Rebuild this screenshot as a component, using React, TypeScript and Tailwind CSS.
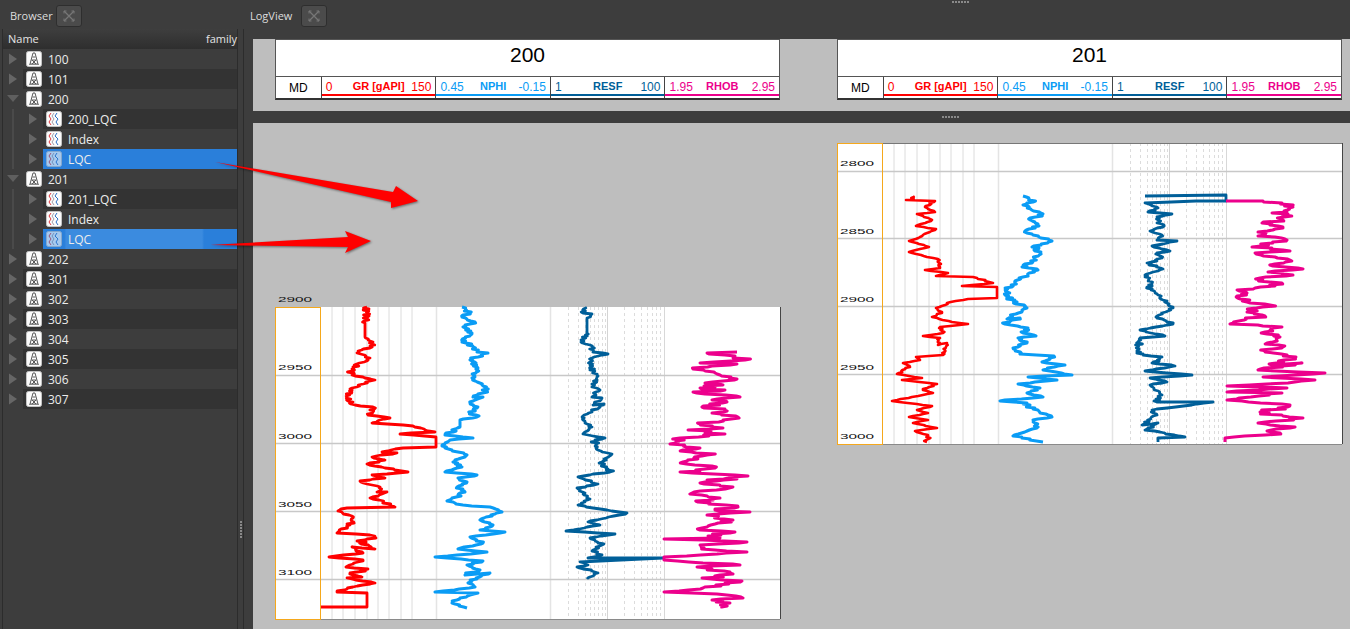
import React from "react"

type Pts = number[]

const RED = "#ff0000"
const BLUE = "#0a9cf5"
const NAVY = "#005f99"
const PINK = "#ec008c"

// curve anchors are x,y pairs in page pixels, traced off the screenshot
const L_GR: Pts = [367,307,365,323,365,337,373,342,370,348,357,353,370,358,353,367,352,375,375,380,350,389,347,397,355,405,373,407,368,415,390,418,372,423,413,426,435,432,400,434,436,437,436,447,403,448,382,452,397,453,372,457,385,460,367,464,385,468,408,472,372,475,385,478,360,481,380,487,377,492,387,492,370,498,383,502,395,507,347,508,338,511,353,518,350,525,337,533,370,535,376,538,357,541,375,549,352,547,363,553,329,557,363,560,346,567,368,569,350,573,362,577,347,578,375,583,353,587,337,592,367,593,367,607,320,607]
const L_NPHI: Pts = [462,307,470,313,462,317,475,322,463,327,472,333,462,342,473,347,477,352,488,353,470,360,478,368,472,378,482,385,487,391,473,397,483,397,470,403,477,408,470,413,477,417,460,420,460,427,445,435,473,438,450,440,442,446,458,452,467,455,453,462,462,467,445,472,477,475,458,478,467,482,457,487,465,492,458,495,447,501,463,505,490,507,502,512,480,520,493,525,480,530,505,532,470,537,483,543,458,549,487,552,435,557,483,561,467,565,480,570,465,575,490,573,468,583,475,587,435,592,478,593,460,598,452,603,467,608]
const L_RESF: Pts = [585,307,583,313,592,314,587,318,587,333,581,342,590,345,593,352,608,354,592,358,590,365,597,377,592,387,600,390,592,397,602,398,593,405,604,404,583,416,585,423,592,427,583,434,605,438,595,440,598,450,612,454,602,462,610,472,578,477,598,484,577,488,590,499,578,505,593,508,627,513,588,522,600,525,566,531,615,534,590,538,602,545,593,550,602,555,588,558,663,558,580,562,588,565,577,567,598,573,587,579]
const L_RHOB: Pts = [737,352,707,353,735,356,745,360,700,363,737,364,712,366,693,369,720,375,737,379,705,383,723,385,700,388,725,390,693,392,740,397,712,400,727,402,702,407,725,410,712,413,738,417,700,424,723,428,688,430,725,434,680,438,670,444,700,448,683,450,707,455,683,462,715,468,680,472,748,476,707,480,737,479,700,483,733,487,692,493,720,498,698,502,738,507,715,510,750,512,707,515,733,520,715,524,700,530,735,532,708,536,720,538,664,539,747,542,700,545,715,550,747,552,664,557,664,560,740,565,697,567,733,574,702,578,742,581,703,588,664,592,717,594,743,598,712,600,730,603,722,608]

const R_GR: Pts = [913,196,912,200,906,200,935,201,925,207,935,212,917,214,932,220,916,226,936,229,920,237,909,241,929,247,909,252,927,257,938,259,940,268,925,270,948,273,936,276,973,277,993,283,962,286,997,287,997,298,968,299,947,303,936,308,942,313,932,317,952,322,968,324,940,327,943,333,923,336,940,338,938,345,947,343,943,355,916,357,920,360,903,363,910,367,897,374,922,378,902,380,937,384,923,390,933,393,892,401,932,406,917,410,928,413,909,417,928,420,913,423,937,428,915,431,928,435,927,442]
const R_NPHI: Pts = [1023,196,1033,202,1023,205,1043,214,1030,218,1039,226,1025,231,1033,235,1052,241,1032,247,1040,253,1032,263,1022,267,1038,270,1023,277,1015,283,1005,295,1017,302,1027,308,1007,319,1020,318,1005,324,1028,328,1023,333,1036,336,1018,338,1027,343,1013,348,1020,354,1054,356,1042,362,1065,365,1043,370,1072,375,1028,377,1057,380,1018,384,1040,388,1027,393,1043,397,1000,401,1027,403,1040,413,1052,417,1033,420,1037,428,1013,436,1043,442]
const R_RESF: Pts = [1145,196,1226,195,1226,201,1196,201,1145,203,1158,208,1148,212,1172,214,1157,217,1163,227,1150,231,1162,235,1157,240,1177,241,1152,246,1170,251,1157,253,1162,258,1147,263,1163,269,1145,275,1152,283,1147,287,1158,295,1173,308,1156,317,1173,324,1140,330,1165,336,1140,338,1138,350,1143,355,1162,357,1152,363,1175,366,1145,371,1192,375,1150,378,1167,382,1150,385,1162,395,1157,402,1213,402,1152,410,1157,415,1142,425,1158,423,1145,430,1160,432,1185,437,1158,438,1158,442]
const R_RHOB: Pts = [1226,201,1263,201,1282,203,1293,207,1272,213,1288,214,1283,220,1262,223,1283,228,1258,232,1275,237,1287,240,1252,247,1290,251,1255,253,1275,257,1290,260,1273,266,1303,269,1268,272,1293,275,1260,278,1275,286,1237,290,1247,293,1237,296,1247,302,1270,305,1247,312,1262,315,1230,324,1282,327,1265,332,1280,337,1267,343,1283,347,1265,352,1296,357,1272,365,1302,363,1258,370,1325,373,1263,377,1315,380,1288,383,1227,386,1287,388,1227,392,1282,393,1227,400,1290,405,1260,412,1303,418,1258,423,1290,428,1267,431,1280,433,1225,438,1225,442]

const L_DEPTHS = [{ t: "2900", y: 302 }, { t: "2950", y: 370 }, { t: "3000", y: 439 }, { t: "3050", y: 507 }, { t: "3100", y: 575 }]
const R_DEPTHS = [{ t: "2800", y: 166 }, { t: "2850", y: 234 }, { t: "2900", y: 302 }, { t: "2950", y: 370 }, { t: "3000", y: 439 }]

const GR_LINES = [332, 343, 355, 367, 378, 389, 401, 412]
const LOG_DOTS = [18, 28, 35, 40, 44, 48, 52, 55, 74, 84, 91, 97, 102, 106, 110, 114]

// adds the fine wiggle of the log between the traced anchors
const trace = (p: Pts, amp: number, seed: number) => {
  let s = seed * 7919
  const rnd = () => {
    s = (s * 16807) % 2147483647
    return s / 2147483647
  }
  const out: string[] = []
  for (let i = 0; i + 3 < p.length; i += 2) {
    const dy = p[i + 3] - p[i + 1]
    const straight = p[i] === p[i + 2]
    const n = Math.abs(dy) < 1 || straight ? 1 : Math.round(Math.abs(dy))
    for (let k = 0; k < n; k++) {
      const t = k / n
      const spike = rnd() > 0.8 ? 2 : 1
      const j = k === 0 ? 0 : (rnd() - 0.5) * amp * 2 * spike
      out.push(`${(p[i] + (p[i + 2] - p[i]) * t + j).toFixed(1)},${(p[i + 1] + dy * t).toFixed(1)}`)
    }
  }
  out.push(`${p[p.length - 2]},${p[p.length - 1]}`)
  return out.join(" ")
}

const LogPlot = ({ x, top, bottom, svgTop, rows, depths, curves, topBorder }: {
  x: number
  top: number
  bottom: number
  svgTop: number
  rows: number[]
  depths: { t: string; y: number }[]
  curves: { pts: Pts; color: string; amp: number; seed: number; w: number }[]
  topBorder: boolean
}) => {
  const right = x + 505
  const vb = `${x} ${svgTop} 507 ${bottom + 3 - svgTop}`
  return (
    <svg viewBox={vb} width={507} height={bottom + 3 - svgTop} className="block shrink-0">
      <rect x={x} y={top} width={505} height={bottom - top} fill="#fff" />
      {GR_LINES.map((v) => (
        <line key={v} x1={v + x - 275} x2={v + x - 275} y1={top} y2={bottom} stroke="#dcdcdc" />
      ))}
      <line x1={x + 161.5} x2={x + 161.5} y1={top} y2={bottom} stroke="#e4e4e4" strokeWidth={1.5} />
      <line x1={x + 275.5} x2={x + 275.5} y1={top} y2={bottom} stroke="#e4e4e4" strokeWidth={1.5} />
      {LOG_DOTS.map((v) => (
        <line key={v} x1={x + 275.5 + v} x2={x + 275.5 + v} y1={top} y2={bottom} stroke="#dcdcdc" strokeDasharray="3 3" />
      ))}
      <line x1={x + 332.5} x2={x + 332.5} y1={top} y2={bottom} stroke="#d4d4d4" />
      <line x1={x + 389.5} x2={x + 389.5} y1={top} y2={bottom} stroke="#d8d8d8" />
      {rows.map((r) => (
        <line key={r} x1={x} x2={right} y1={r + 0.5} y2={r + 0.5} stroke="#c8c8c8" strokeWidth={1.5} />
      ))}
      {curves.map((c) => (
        <polyline key={c.seed} points={trace(c.pts, c.amp, c.seed)} fill="none" stroke={c.color} strokeWidth={c.w} strokeLinejoin="round" />
      ))}
      {topBorder && <line x1={x} x2={right} y1={top + 0.5} y2={top + 0.5} stroke="#777" />}
      <line x1={x + 45} x2={right} y1={bottom + 0.5} y2={bottom + 0.5} stroke="#8a8a8a" />
      <line x1={right + 0.5} x2={right + 0.5} y1={top} y2={bottom} stroke="#444" />
      <rect x={x + 0.5} y={top + 0.5} width={45} height={bottom - top} fill="none" stroke="#f5a81c" />
      {depths.map((d) => (
        <text key={d.t} x={x + 3} y={d.y} fontFamily="Liberation Sans" fontSize={8} fill="#111" textLength={34} lengthAdjust="spacingAndGlyphs">
          {d.t}
        </text>
      ))}
    </svg>
  )
}

const WellIcon = () => (
  <svg width="16" height="16" viewBox="0 0 16 16" className="shrink-0">
    <rect x="0.5" y="0.5" width="15" height="15" rx="2" fill="#fbfbfb" stroke="#c4c4c4" />
    <path d="M7 2h2l3 11H4z M5.5 9h5 M6.5 6h3 M6 9l4 4 M10 9l-4 4" fill="none" stroke="#5a5a5a" strokeWidth="1" />
    <path d="M3 13.5h10" stroke="#8a8a8a" strokeWidth="1" />
  </svg>
)

const LogIcon = ({ dim }: { dim?: boolean }) => (
  <svg width="16" height="16" viewBox="0 0 16 16" className={dim ? "shrink-0 opacity-60" : "shrink-0"}>
    <rect x="0.5" y="0.5" width="15" height="15" rx="2" fill="#fbfbfb" stroke="#c4c4c4" />
    <path d="M5 2L3 5l2 3-2 3 2 3" fill="none" stroke="#e0393e" strokeWidth="1" />
    <path d="M8 2L6 5l2 3-2 3 2 3" fill="none" stroke="#a0a0ac" strokeWidth="1" />
    <path d="M11 2L9 5l3 3-2 3 2 3" fill="none" stroke="#2c6fc4" strokeWidth="1" />
  </svg>
)

const Toggle = ({ open }: { open?: boolean }) => (
  <svg width="14" height="12" viewBox="0 0 14 12" className="shrink-0">
    {open ? <polygon points="1,2 13,2 7,9" fill="#5f5f5f" /> : <polygon points="3,0.5 11,6 3,11.5" fill="#666" />}
  </svg>
)

const CloseBtn = () => (
  <div className="flex h-[22px] w-[26px] items-center justify-center rounded-[3px] border border-[#2e2e2e] bg-[#4b4b4b]">
    <svg width="12" height="12" viewBox="0 0 12 12">
      <path d="M1 1l10 10M11 1L1 11" stroke="#767676" strokeWidth="1.3" />
      <path d="M1 3.5V1h2.5M8.5 1H11v2.5M11 8.5V11H8.5M3.5 11H1V8.5" fill="none" stroke="#767676" />
    </svg>
  </div>
)

type Row = { name: string; kind: "well" | "log"; open?: boolean; sel?: "plain" | "hover" }

const ROWS: Row[] = [
  { name: "100", kind: "well" },
  { name: "101", kind: "well" },
  { name: "200", kind: "well", open: true },
  { name: "200_LQC", kind: "log" },
  { name: "Index", kind: "log" },
  { name: "LQC", kind: "log", sel: "plain" },
  { name: "201", kind: "well", open: true },
  { name: "201_LQC", kind: "log" },
  { name: "Index", kind: "log" },
  { name: "LQC", kind: "log", sel: "hover" },
  { name: "202", kind: "well" },
  { name: "301", kind: "well" },
  { name: "302", kind: "well" },
  { name: "303", kind: "well" },
  { name: "304", kind: "well" },
  { name: "305", kind: "well" },
  { name: "306", kind: "well" },
  { name: "307", kind: "well" },
]

const TreeRow = ({ row, odd }: { row: Row; odd: boolean }) => {
  const band = row.sel === "plain"
    ? "bg-[#2a7fda]"
    : row.sel === "hover"
      ? "bg-[linear-gradient(90deg,#2a7fda_0%,#2a7fda_11%,#3b8bdf_12%,#3b8bdf_82%,#2a7fda_83%)]"
      : odd
        ? "bg-[#333333]"
        : ""
  return (
    <div className="flex h-5 items-center">
      {row.kind === "log" ? (
        <>
          <div className="ml-[9px] h-full w-[2px] bg-[#4a4a4a]" />
          <div className="ml-[12px]"><Toggle /></div>
        </>
      ) : (
        <div className="ml-[3px]"><Toggle open={row.open} /></div>
      )}
      <div className={`ml-[3px] flex h-full flex-1 items-center pl-[3px] ${band}`}>
        {row.kind === "well" ? <WellIcon /> : <LogIcon dim={!!row.sel} />}
        <span className="ml-[6px] pt-[1px] text-[12px] text-[#ececec]">{row.name}</span>
      </div>
    </div>
  )
}

const Dots = ({ vertical }: { vertical?: boolean }) => (
  <div className={vertical ? "flex flex-col gap-[1px]" : "flex gap-[1px]"}>
    {[0, 1, 2, 3, 4, 5].map((i) => (
      <div key={i} className="h-[2px] w-[2px] bg-[#8a8a8a]" />
    ))}
  </div>
)

const TRACKS = [
  { lo: "0", name: "GR [gAPI]", hi: "150", text: "text-[#ff0000]", line: "border-[#ff0000]" },
  { lo: "0.45", name: "NPHI", hi: "-0.15", text: "text-[#0a9cf5]", line: "border-[#0a9cf5]" },
  { lo: "1", name: "RESF", hi: "100", text: "text-[#005f99]", line: "border-[#005f99]" },
  { lo: "1.95", name: "RHOB", hi: "2.95", text: "text-[#ec008c]", line: "border-[#ec008c]" },
]

const WellHeader = ({ title }: { title: string }) => (
  <div className="flex h-[61px] w-[505px] flex-col border border-b-2 border-[#555] border-b-[#333] bg-white font-['Liberation_Sans'] text-black">
    <div className="flex h-[37px] items-center justify-center border-b border-[#555] pb-[6px] text-[21px]">{title}</div>
    <div className="flex flex-1">
      <div className="flex w-[45px] items-center justify-center text-[12px]">MD</div>
      {TRACKS.map((t) => (
        <div key={t.name} className={`w-[115px] border-l border-[#444] pb-[2px] ${t.text}`}>
          <div className={`grid h-full grid-cols-[1fr_auto_1fr] items-center border-b-2 px-[4px] pt-[2px] text-[12px] leading-none ${t.line}`}>
            <span>{t.lo}</span>
            <span className="font-bold text-[11px]">{t.name}</span>
            <span className="text-right">{t.hi}</span>
          </div>
        </div>
      ))}
    </div>
  </div>
)

export default function App() {
  return (
    <div className="relative flex h-[629px] w-[1350px] overflow-hidden bg-[#3d3d3d] font-['Open_Sans',sans-serif]">
      {/* browser panel */}
      <aside className="flex w-[238px] shrink-0 flex-col pl-[2px]">
        <div className="flex h-[29px] shrink-0 items-center pt-[3px] pl-[8px]">
          <span className="w-[46px] text-[11px] text-[#dcdcdc]">Browser</span>
          <CloseBtn />
        </div>
        <div className="flex flex-1 flex-col border-x border-[#2c2c2c]">
          <div className="flex h-[20px] shrink-0 items-center justify-between bg-[linear-gradient(#3e3e3e,#2e2e2e)] pl-[5px] text-[11px] text-[#e4e4e4]">
            <span>Name</span>
            <span>family</span>
          </div>
          {ROWS.map((r, i) => (
            <TreeRow key={i} row={r} odd={i % 2 === 1} />
          ))}
        </div>
      </aside>

      {/* splitter */}
      <div className="mt-[29px] flex w-[5px] shrink-0 items-end justify-center pb-[91px]">
        <Dots vertical />
      </div>

      {/* log view */}
      <main className="flex min-w-0 flex-1 flex-col">
        <div className="flex h-[29px] shrink-0 items-center pt-[3px] pl-[7px]">
          <span className="w-[51px] text-[11px] text-[#dcdcdc]">LogView</span>
          <CloseBtn />
        </div>
        <div className="flex min-h-0 flex-1 flex-col border-l border-[#2c2c2c] pl-[9px] pt-[10px]">
          <div className="flex h-[72px] shrink-0 gap-[57px] bg-[#bebebe] pl-[22px]">
            <WellHeader title="200" />
            <WellHeader title="201" />
          </div>
          <div className="flex h-[12px] shrink-0 items-center pl-[689px]">
            <Dots />
          </div>
          <div className="flex min-h-0 flex-1 gap-[55px] overflow-hidden bg-[#bebebe] pl-[22px]">
            <div className="mt-[170px]">
              <LogPlot
                x={275}
                top={307}
                bottom={619}
                svgTop={293}
                rows={[375, 443, 511, 579]}
                depths={L_DEPTHS}
                topBorder={false}
                curves={[
                  { pts: L_GR, color: RED, amp: 3.5, seed: 11, w: 2.8 },
                  { pts: L_NPHI, color: BLUE, amp: 3, seed: 23, w: 3 },
                  { pts: L_RESF, color: NAVY, amp: 2.2, seed: 37, w: 2.8 },
                  { pts: L_RHOB, color: PINK, amp: 8, seed: 41, w: 3 },
                ]}
              />
            </div>
            <div className="mt-[20px]">
              <LogPlot
                x={837}
                top={143}
                bottom={444}
                svgTop={143}
                rows={[171, 238, 306, 374]}
                depths={R_DEPTHS}
                topBorder
                curves={[
                  { pts: R_GR, color: RED, amp: 1.6, seed: 53, w: 2.6 },
                  { pts: R_NPHI, color: BLUE, amp: 3, seed: 67, w: 3 },
                  { pts: R_RESF, color: NAVY, amp: 2.2, seed: 71, w: 2.8 },
                  { pts: R_RHOB, color: PINK, amp: 7, seed: 83, w: 3 },
                ]}
              />
            </div>
          </div>
        </div>
      </main>

      {/* top splitter grip */}
      <div className="absolute left-[952px] top-[1px]">
        <Dots />
      </div>

      {/* annotation arrows */}
      <svg className="pointer-events-none absolute left-0 top-0 drop-shadow-[1px_1px_1px_rgba(0,0,0,0.45)]" width="1350" height="629">
        <polygon points="215,162 393,192 396,186 418,201 391,208 391,202" fill="#ff0000" />
        <polygon points="210,245 348,237 345,231 371,241 345,253 348,247" fill="#ff0000" />
      </svg>
    </div>
  )
}
